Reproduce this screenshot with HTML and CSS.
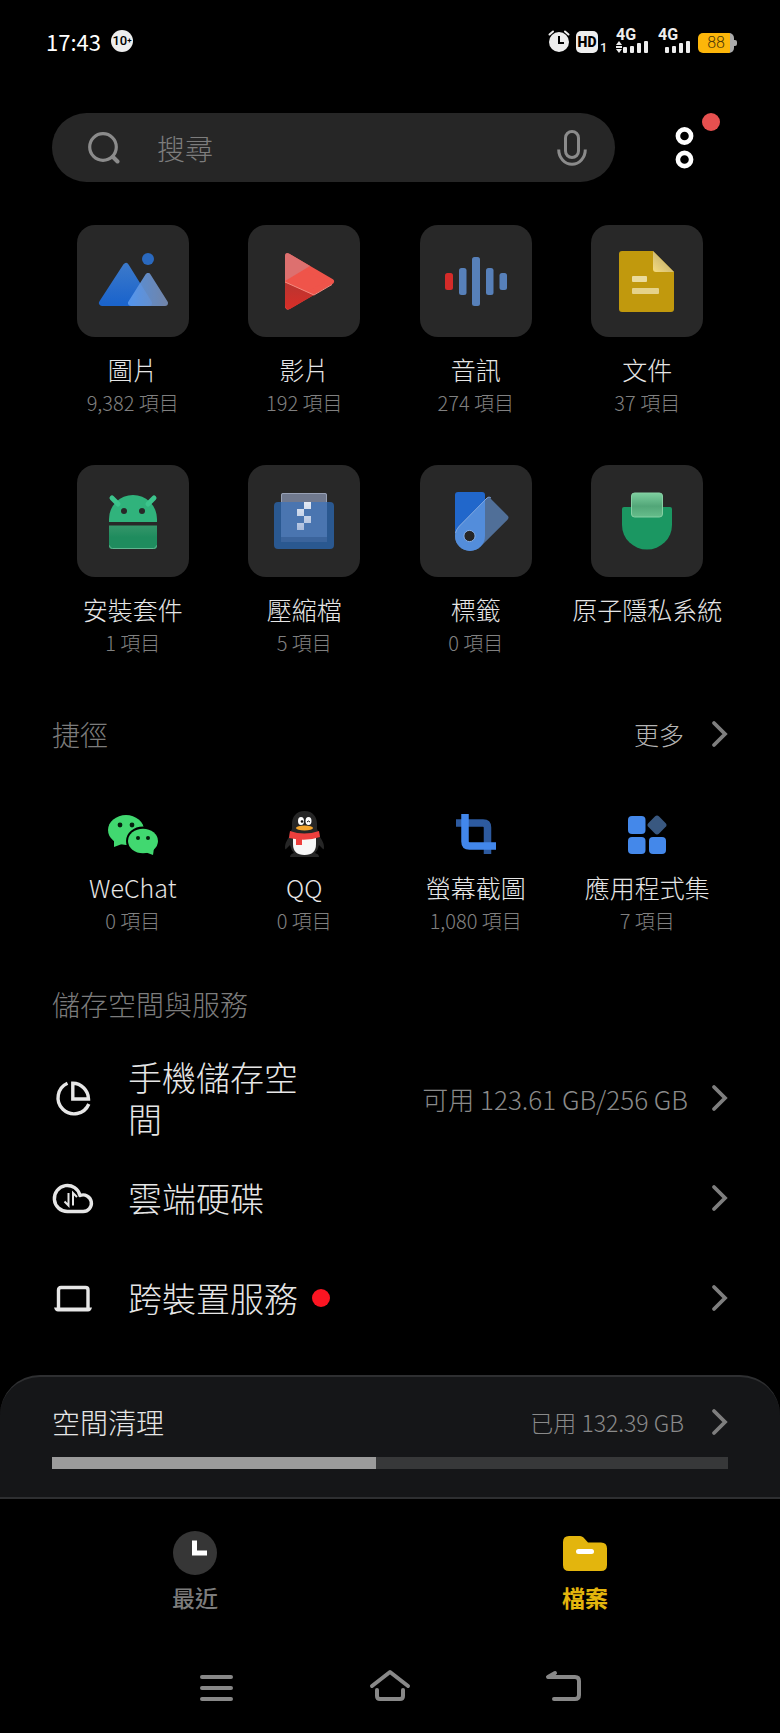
FILE: index.html
```
<!DOCTYPE html>
<html lang="zh-Hant">
<head>
    <meta charset="UTF-8">
    <meta name="viewport" content="width=device-width, initial-scale=1.0">
    <title>檔案</title>
    <link rel="stylesheet" href="styles.css">
</head>
<body>
    <svg width="0" height="0" class="defs" aria-hidden="true">
        <defs>
            <linearGradient id="blueGrad" x1="0" y1="0" x2="0" y2="1"><stop offset="0" stop-color="#3a78ca"/><stop offset="1" stop-color="#1b64cc"/></linearGradient>
            <linearGradient id="glassGrad" x1="0" y1="0" x2="1" y2="0"><stop offset="0" stop-color="#5b9aee"/><stop offset="1" stop-color="#7890ba"/></linearGradient>
            <linearGradient id="redGrad" x1="0" y1="0" x2="0" y2="1"><stop offset="0" stop-color="#b83530"/><stop offset="1" stop-color="#d82e28"/></linearGradient>
            <linearGradient id="foldGrad" x1="0" y1="1" x2="1" y2="0"><stop offset="0" stop-color="#f5dc80"/><stop offset="0.5" stop-color="#d3bd72"/><stop offset="1" stop-color="#f1e0a0"/></linearGradient>
            <linearGradient id="bodyGrad" x1="0" y1="0" x2="0" y2="1"><stop offset="0" stop-color="#35966a"/><stop offset="0.5" stop-color="#1f8c5e"/><stop offset="1" stop-color="#1f8c5e"/></linearGradient>
            <linearGradient id="cardGrad" x1="0" y1="0" x2="0" y2="1"><stop offset="0" stop-color="#7dcf9f"/><stop offset="0.55" stop-color="#52a678"/><stop offset="1" stop-color="#66bd8b"/></linearGradient>
            <linearGradient id="pixGrad" x1="0" y1="0" x2="0" y2="1"><stop offset="0" stop-color="#e4eaf4"/><stop offset="1" stop-color="#a9bcdc"/></linearGradient>
            <symbol id="chevron" viewBox="0 0 18 30"><path d="M4 4l11 11L4 26" fill="none" stroke="currentColor" stroke-width="3.800" stroke-linecap="round" stroke-linejoin="miter"/></symbol>
        </defs>
    </svg>

    <div class="statusbar">
        <span class="time">17:43</span>
        <span class="badge">10<small>+</small></span>
        <div class="status-icons">
            <svg width="22" height="24" viewBox="0 0 22 24"><circle cx="11" cy="13" r="10" fill="#eee"/><path d="M1.500 5.500L5 2.500M20.500 5.500L17 2.500" stroke="#eee" stroke-width="2" stroke-linecap="round"/><path d="M11 7v7h5" fill="none" stroke="#000" stroke-width="2"/></svg>
            <span class="hd">HD</span><span class="sim">1</span>
            <div class="signal">
                <span>4G</span>
                <svg width="32" height="12" viewBox="0 0 32 12"><path d="M3 0l3 4H0zM3 12l3-4H0zM0 5h6v2H0z" fill="#eee"/><g fill="#eee"><rect x="7" y="6" width="4" height="6" rx="1"/><rect x="14" y="5" width="4" height="7" rx="1"/><rect x="21" y="2" width="4" height="10" rx="1"/><rect x="28" y="0" width="4" height="12" rx="1"/></g></svg>
            </div>
            <div class="signal">
                <span>4G</span>
                <svg width="32" height="12" viewBox="0 0 32 12"><g fill="#eee"><rect x="7" y="6" width="4" height="6" rx="1"/><rect x="14" y="5" width="4" height="7" rx="1"/><rect x="21" y="2" width="4" height="10" rx="1"/><rect x="28" y="0" width="4" height="12" rx="1"/></g></svg>
            </div>
            <span class="battery">88</span>
        </div>
    </div>

    <header class="topbar">
        <form class="search" role="search">
            <svg width="32" height="32" viewBox="0 0 32 32"><circle cx="15" cy="15" r="13.300" fill="none" stroke="#8b8b8b" stroke-width="3.200"/><path d="M25 25l4.500 4.500" stroke="#8b8b8b" stroke-width="4" stroke-linecap="round"/></svg>
            <input type="text" placeholder="搜尋" aria-label="搜尋">
            <button type="button" class="plain" aria-label="語音">
                <svg width="30" height="36" viewBox="0 0 30 36"><rect x="8.500" y="1.500" width="13" height="26" rx="6.500" fill="none" stroke="#8b8b8b" stroke-width="3"/><path d="M1.700 19.500a13.300 14.800 0 0 0 26.600 0" fill="none" stroke="#8b8b8b" stroke-width="3"/></svg>
            </button>
        </form>
        <button type="button" class="plain more-menu" aria-label="選單">
            <svg width="20" height="44" viewBox="0 0 20 44"><g fill="none" stroke="#fff" stroke-width="4.600"><circle cx="9.500" cy="10" r="6.600"/><circle cx="9.500" cy="33.500" r="6.600"/></g></svg>
            <span class="dot"></span>
        </button>
    </header>

    <main>
        <nav class="grid">
            <a href="#" class="item">
                <span class="tile"><svg viewBox="0 0 112 112"><circle cx="71" cy="34" r="6" fill="#2a69bf"/><path d="M49 41L25 78H72z" fill="url(#blueGrad)" stroke="url(#blueGrad)" stroke-width="6" stroke-linejoin="round"/><path d="M71 51L54 78H88z" fill="url(#glassGrad)" stroke="url(#glassGrad)" stroke-width="6" stroke-linejoin="round" opacity="0.9"/></svg></span>
                <span class="name">圖片</span><span class="count">9,382 項目</span>
            </a>
            <a href="#" class="item">
                <span class="tile"><svg viewBox="0 0 112 112"><path d="M40 31.500L83 56.500L40 81.500z" fill="#ef544a" stroke="#ef544a" stroke-width="6" stroke-linejoin="round"/><path d="M37 56V31q0-4 4-2.500L62 41z" fill="#dd706f"/><path d="M37 57L66 70L42 84q-5 1-5-4z" fill="url(#redGrad)"/><path d="M37 57L66 70L84 59.500" fill="none" stroke="#f58b80"/></svg></span>
                <span class="name">影片</span><span class="count">192 項目</span>
            </a>
            <a href="#" class="item">
                <span class="tile"><svg viewBox="0 0 112 112"><rect x="25" y="48" width="8" height="17" rx="2.500" fill="#d42b29"/><g fill="#5780b9"><rect x="39" y="43" width="7.500" height="27" rx="2.500"/><rect x="52" y="32" width="8" height="49" rx="2.500"/><rect x="66" y="43" width="7.500" height="27" rx="2.500"/><rect x="79.500" y="48" width="7.500" height="17" rx="2.500"/></g></svg></span>
                <span class="name">音訊</span><span class="count">274 項目</span>
            </a>
            <a href="#" class="item">
                <span class="tile"><svg viewBox="0 0 112 112"><path d="M31 26H62L83 47V84q0 3-3 3H31q-3 0-3-3V29q0-3 3-3z" fill="#c1990d"/><path d="M62 26L83 47H65q-3 0-3-3z" fill="url(#foldGrad)"/><rect x="41" y="51" width="15" height="6" rx="1" fill="#eadb9c"/><rect x="41" y="63" width="27" height="6" rx="1" fill="#e5d28a"/></svg></span>
                <span class="name">文件</span><span class="count">37 項目</span>
            </a>
            <a href="#" class="item">
                <span class="tile"><svg viewBox="0 0 112 112"><path d="M32 57V54a24 24 0 0 1 48 0v3z" fill="#30b37c"/><path d="M35 33l6 6M77 33l-6 6" stroke="#3cc48c" stroke-width="5" stroke-linecap="round"/><circle cx="47" cy="46" r="3" fill="#282828"/><circle cx="65" cy="46" r="3" fill="#282828"/><path d="M32 60.500H80V81q0 3-3 3H35q-3 0-3-3z" fill="url(#bodyGrad)"/><path d="M32.500 80.500q0 3 3 3h41q3 0 3-3" fill="none" stroke="#5fb68f"/></svg></span>
                <span class="name">安裝套件</span><span class="count">1 項目</span>
            </a>
            <a href="#" class="item">
                <span class="tile"><svg viewBox="0 0 112 112"><rect x="33" y="28" width="46" height="20" rx="2" fill="#70798e"/><path d="M33.500 38V30q0-1.500 1.500-1.500H77q1.500 0 1.500 1.500v8" fill="none" stroke="#98a1b5"/><rect x="26" y="37" width="60" height="47" rx="4" fill="#2a5890"/><path d="M33 37H79V77H33z" fill="#3b649c"/><path d="M33 37H79V72H33z" fill="#4a75b0"/><path d="M56 37h7v7h-7zM49 44h7v7h-7zM56 51h7v7h-7zM49 58h7v7h-7z" fill="url(#pixGrad)"/></svg></span>
                <span class="name">壓縮檔</span><span class="count">5 項目</span>
            </a>
            <a href="#" class="item">
                <span class="tile"><svg viewBox="0 0 112 112"><path d="M38 27H62q3 0 3 3V71H35V30q0-3 3-3z" fill="#2167cb"/><path d="M38 30H62q3 0 3 3V71a15 15 0 0 1-30 0V33q0-3 3-3z" fill="#506f98" transform="rotate(45 50 71)"/><path d="M35 71q0-6 4-10L65 35V71a15 15 0 0 1-30 0z" fill="#538ddb"/><path d="M35.500 68q1-4 4-7L67 33q2-2 4 0" fill="none" stroke="#7da6e2"/><circle cx="49.500" cy="71" r="5.600" fill="#262626" stroke="#86aee6"/></svg></span>
                <span class="name">標籤</span><span class="count">0 項目</span>
            </a>
            <a href="#" class="item">
                <span class="tile"><svg viewBox="0 0 112 112"><path d="M33 42H79q2 0 2 2V60a25 24.500 0 0 1-50 0V44q0-2 2-2z" fill="#1b9762"/><rect x="40.500" y="28" width="31" height="24" rx="3" fill="url(#cardGrad)" stroke="#86d0a4"/></svg></span>
                <span class="name">原子隱私系統</span>
            </a>
        </nav>

        <div class="section-head">
            <h2>捷徑</h2>
            <a href="#" class="more">更多 <svg class="chevron"><use href="#chevron"/></svg></a>
        </div>

        <nav class="grid shortcuts">
            <a href="#" class="item">
                <svg class="logo" viewBox="0 0 56 56"><g fill="#41d870"><ellipse cx="21" cy="24" rx="18" ry="15"/><path d="M9 32v9l8-3z"/></g><ellipse cx="38" cy="35" rx="17" ry="14.500" fill="#000"/><g fill="#41d870"><ellipse cx="38" cy="35" rx="15" ry="12.200"/><path d="M49 42l-1 7-8-3z"/></g><g fill="#05200e"><circle cx="15" cy="19" r="2.400"/><circle cx="27" cy="19" r="2.400"/><circle cx="33" cy="32" r="2"/><circle cx="43" cy="32" r="2"/></g></svg>
                <span class="name">WeChat</span><span class="count">0 項目</span>
            </a>
            <a href="#" class="item">
                <svg class="logo" viewBox="0 0 56 56"><path d="M28.500 5C20 5 16 11 16 18v5q-3 4-3 8-4 6-4 10 0 3 1 2l4-4q1 5 4 8-4 1-4 4h29q0-3-4-4 3-3 4-8l4 4q1 1 1-2 0-4-4-10 0-4-3-8v-5C41 11 37 5 28.500 5z" fill="#262626"/><path d="M17 30H40v8q0 11-11.500 11T17 38z" fill="#f7f7f7"/><path d="M14 25q14 5 29 0l1 6q-14 5-31 1z" fill="#ee3f3d"/><path d="M20 31h6v8h-6z" fill="#ee3f3d"/><ellipse cx="25" cy="15" rx="3" ry="4" fill="#fff"/><ellipse cx="32.500" cy="15" rx="3" ry="4" fill="#fff"/><circle cx="26" cy="15.500" r="1.300" fill="#111"/><path d="M31 16q1.500-2 3 0" fill="none" stroke="#111"/><ellipse cx="28.500" cy="22" rx="8.500" ry="2.400" fill="#f5a52c"/></svg>
                <span class="name">QQ</span><span class="count">0 項目</span>
            </a>
            <a href="#" class="item">
                <svg class="logo" viewBox="0 0 56 56"><path d="M8 17H35q4.500 0 4.500 4.500V48" fill="none" stroke="#2d5a9f" stroke-width="7.500"/><path d="M17 8V35.500q0 4.500 4.500 4.500H48" fill="none" stroke="#4287eb" stroke-width="7.500"/></svg>
                <span class="name">螢幕截圖</span><span class="count">1,080 項目</span>
            </a>
            <a href="#" class="item">
                <svg class="logo" viewBox="0 0 56 56"><g fill="#4488ea"><rect x="9" y="10" width="17.500" height="18" rx="4"/><rect x="9" y="31" width="17.500" height="17" rx="4"/><rect x="30" y="31" width="17" height="17" rx="4"/></g><rect x="30.500" y="11.500" width="15" height="15" rx="3" fill="#395880" transform="rotate(45 38 19)"/></svg>
                <span class="name">應用程式集</span><span class="count">7 項目</span>
            </a>
        </nav>

        <div class="section-head storage-head">
            <h2>儲存空間與服務</h2>
        </div>

        <div class="rows">
            <a href="#" class="row">
                <svg class="row-icon" viewBox="0 0 42 42"><path d="M15.500 6.200A16 16 0 1 0 36.800 27" fill="none" stroke="#e6e6e6" stroke-width="3.400"/><path d="M20.800 6.300A16 16 0 0 1 36.500 22H20.800z" fill="none" stroke="#e6e6e6" stroke-width="3.400"/></svg>
                <span class="label">手機儲存空間</span>
                <span class="value">可用 123.61 GB/256 GB</span>
                <svg class="chevron"><use href="#chevron"/></svg>
            </a>
            <a href="#" class="row">
                <svg class="row-icon" viewBox="0 0 42 42"><path d="M15.500 34.500A13 13 0 1 1 28 18.500A8.300 8.300 0 1 1 31 34.500z" fill="none" stroke="#e6e6e6" stroke-width="3.400" stroke-linejoin="round"/><path d="M16.500 16v12.500l-4-4M21 28.500V16l4 4" fill="none" stroke="#e6e6e6" stroke-width="2"/></svg>
                <span class="label">雲端硬碟</span>
                <svg class="chevron"><use href="#chevron"/></svg>
            </a>
            <a href="#" class="row">
                <svg class="row-icon" viewBox="0 0 42 42"><path d="M6.500 32V13q0-2.500 2.500-2.500H33.500q2.500 0 2.500 2.500V32" fill="none" stroke="#e6e6e6" stroke-width="3.400"/><path d="M2 30.500H40q-1 4-4 4H6q-3 0-4-4z" fill="#e6e6e6"/></svg>
                <span class="label">跨裝置服務<i class="dot"></i></span>
                <svg class="chevron"><use href="#chevron"/></svg>
            </a>
        </div>
    </main>

    <section class="cleanup">
        <a href="#" class="cleanup-head">
            <span id="cleanupLabel">空間清理</span>
            <span class="used">已用 132.39 GB</span>
            <svg class="chevron"><use href="#chevron"/></svg>
        </a>
        <progress value="48" max="100" aria-labelledby="cleanupLabel"></progress>
    </section>

    <nav class="tabs">
        <a href="#">
            <svg width="44" height="44" viewBox="0 0 44 44"><circle cx="22" cy="22" r="22" fill="#363636"/><path d="M21.500 9.500V22H34" fill="none" stroke="#fff" stroke-width="5"/></svg>
            最近
        </a>
        <a href="#" class="active">
            <svg width="44" height="44" viewBox="0 0 44 44"><path d="M6 5H17q2 0 3.500 1.500L25 11.500H38q6 0 6 6V34q0 6-6 6H6q-6 0-6-6V11q0-6 6-6z" fill="#e3b50d"/><rect x="13" y="18" width="18" height="5" rx="2.500" fill="#fff"/></svg>
            檔案
        </a>
    </nav>

    <div class="sysnav">
        <button type="button" class="plain" aria-label="多工"><svg width="44" height="44" viewBox="0 0 44 44"><path d="M7 11H36M7 22H36M7 33H36"/></svg></button>
        <button type="button" class="plain" aria-label="主畫面"><svg width="44" height="44" viewBox="0 0 44 44"><path d="M4 20L22 6L40 20M9 24v6q0 3 3 3H32q3 0 3-3V24"/></svg></button>
        <button type="button" class="plain" aria-label="返回"><svg width="44" height="44" viewBox="0 0 44 44"><path d="M14 7L7 11H34q4 0 4 4V29q0 4-4 4H13"/></svg></button>
    </div>
</body>
</html>
```
FILE: styles.css
```
* {
    box-sizing: border-box;
}
body {
    margin: 0;
    min-height: 100vh;
    background: #000;
    color: #e6e6e6;
    font-family: "Noto Sans CJK TC", "Noto Sans", sans-serif;
    font-weight: 300;
    display: flex;
    flex-direction: column;
}
a {
    color: inherit;
    text-decoration: none;
}
h2 {
    margin: 0;
    font-size: 28px;
    font-weight: 300;
    color: #7c7c7c;
}
svg {
    display: block;
    flex: none;
}
.defs {
    position: absolute;
}
.plain {
    padding: 0;
    border: 0;
    background: none;
    cursor: pointer;
}
.dot {
    width: 18px;
    height: 18px;
    border-radius: 50%;
    background: #fc1522;
}
.chevron {
    width: 18px;
    height: 30px;
    color: #7e7e7e;
}

/* status bar */
.statusbar {
    display: flex;
    align-items: center;
    height: 82px;
    padding: 0 43px 0 46px;
}
.time {
    font-size: 22px;
    font-weight: 400;
    line-height: 28px;
    color: #fff;
}
.badge {
    display: flex;
    align-items: center;
    justify-content: center;
    width: 22px;
    height: 22px;
    margin-left: 10px;
    border-radius: 50%;
    background: #eee;
    color: #000;
    font: 500 13px/22px Roboto, sans-serif;
}
.badge small {
    font-size: 8px;
    font-weight: 700;
}
.status-icons {
    display: flex;
    align-items: flex-end;
    margin-left: auto;
    height: 24px;
    font-family: Roboto, sans-serif;
    color: #eee;
}
.hd {
    width: 22px;
    height: 22px;
    margin-left: 6px;
    border-radius: 5px;
    background: #eee;
    color: #000;
    font-size: 14px;
    font-weight: 900;
    line-height: 22px;
    text-align: center;
}
.sim {
    margin-left: 2px;
    width: 6px;
    font-size: 13px;
    font-weight: 500;
    line-height: 10px;
}
.signal {
    margin-left: 10px;
}
.signal span {
    display: block;
    font-size: 16px;
    font-weight: 700;
    line-height: 12px;
}
.battery {
    position: relative;
    width: 36px;
    height: 20px;
    margin: 0 3px 0 8px;
    border-radius: 5px;
    background: linear-gradient(90deg, #fdb60a 90%, #aaa 90%);
    color: #4d3908;
    font-size: 16px;
    line-height: 20px;
    text-align: center;
}
.battery::after {
    content: "";
    position: absolute;
    top: 7px;
    right: -3px;
    width: 3px;
    height: 6px;
    border-radius: 0 2px 2px 0;
    background: #aaa;
}

/* search */
.topbar {
    display: flex;
    align-items: center;
    padding: 31px 60px 0 52px;
}
.search {
    flex: 1;
    min-width: 0;
    display: flex;
    align-items: center;
    height: 69px;
    padding: 0 28px 0 36px;
    border-radius: 35px;
    background: #262626;
}
.search input {
    flex: 1;
    min-width: 0;
    margin-left: 37px;
    padding: 0;
    border: 0;
    outline: 0;
    background: none;
    color: #e6e6e6;
    font: inherit;
    font-size: 28px;
}
.search input::placeholder {
    color: #7d7d7d;
    opacity: 1;
}
.more-menu {
    position: relative;
    display: flex;
    align-items: center;
    height: 69px;
    margin-left: 60px;
    padding-right: 25px;
}
.more-menu .dot {
    position: absolute;
    top: 0;
    right: 0;
    background: #e6504f;
}

/* categories and shortcuts */
.grid {
    display: grid;
    grid-template-columns: repeat(4, 1fr);
    row-gap: 46px;
    padding: 43px 47px 0;
}
.item {
    display: flex;
    flex-direction: column;
    align-items: center;
    white-space: nowrap;
}
.tile {
    width: 112px;
    height: 112px;
    margin-bottom: 15px;
    border-radius: 18px;
    background: #282828;
}
.name {
    font-size: 25px;
    line-height: 34px;
}
.count {
    font-size: 20px;
    line-height: 33px;
    color: #808080;
}
.shortcuts {
    padding-top: 52px;
}
.logo {
    width: 56px;
    height: 56px;
    margin-bottom: 8px;
}
.section-head {
    display: flex;
    align-items: center;
    justify-content: space-between;
    height: 40px;
    margin-top: 55px;
    padding: 0 52px;
}
.storage-head {
    margin-top: 47px;
}
.more {
    display: flex;
    align-items: center;
    gap: 26px;
    font-size: 25px;
    color: #b4b4b4;
}

/* storage rows */
.rows {
    padding: 24px 52px 0;
}
.row {
    display: flex;
    align-items: center;
    min-height: 100px;
}
.row-icon {
    width: 42px;
    height: 42px;
    margin-right: 34px;
}
.label {
    display: flex;
    align-items: center;
    gap: 14px;
    flex: 1;
    font-size: 34px;
    line-height: 42px;
}
.value {
    margin: 0 22px 0 110px;
    font-size: 26px;
    color: #8a8a8a;
    white-space: nowrap;
}

/* cleanup sheet */
.cleanup {
    margin-top: 27px;
    padding: 27px 52px 28px;
    border-top: 2px solid #2e2f31;
    border-bottom: 2px solid #2e2f31;
    border-radius: 40px 40px 0 0;
    background: #151618;
}
.cleanup-head {
    display: flex;
    align-items: center;
    font-size: 28px;
    line-height: 36px;
}
.used {
    margin: 0 26px 0 auto;
    font-size: 23px;
    color: #8a8a8a;
}
progress {
    display: block;
    width: 100%;
    height: 12px;
    margin-top: 17px;
    border: 0;
    appearance: none;
    -webkit-appearance: none;
    background: #373839;
}
progress::-webkit-progress-bar {
    background: #373839;
}
progress::-webkit-progress-value {
    background: #9b9b9b;
}

/* bottom tabs */
.tabs {
    display: grid;
    grid-template-columns: 1fr 1fr;
    padding-top: 32px;
}
.tabs a {
    display: flex;
    flex-direction: column;
    align-items: center;
    gap: 7px;
    font-size: 23px;
    font-weight: 500;
    line-height: 30px;
    color: #7c7c7c;
}
.tabs .active {
    color: #e3b50d;
    font-weight: 700;
}
.sysnav {
    display: grid;
    grid-template-columns: repeat(3, 1fr);
    justify-items: center;
    margin-top: auto;
    padding: 53px 130px 23px;
}
.sysnav svg {
    fill: none;
    stroke: #888;
    stroke-width: 4;
    stroke-linecap: round;
    stroke-linejoin: round;
}
```
